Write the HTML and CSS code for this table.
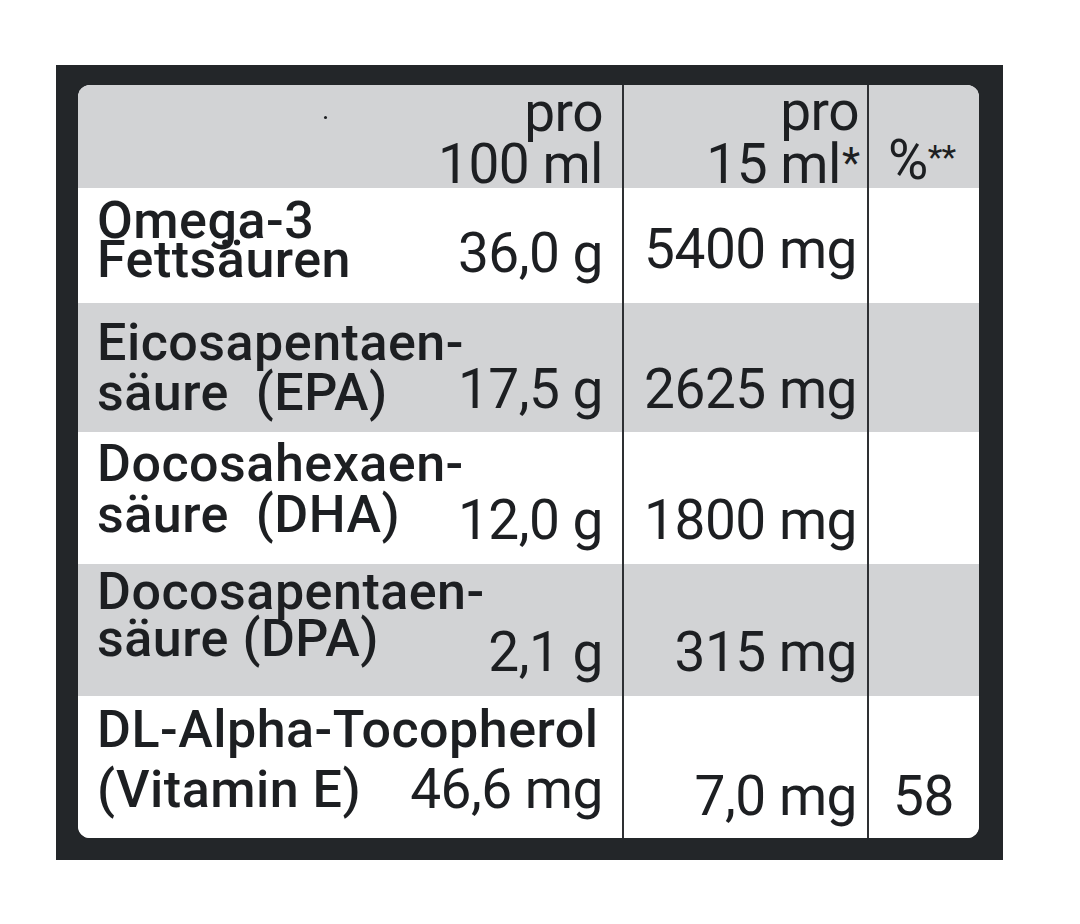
FILE: index.html
```html
<!DOCTYPE html>
<html lang="de">
<head>
<meta charset="utf-8">
<title>Nährwerte</title>
<link rel="stylesheet" href="styles.css">
</head>
<body>
<div class="frame">
  <div class="table">
    <div class="row head">
      <div class="cell name"><span class="dot"></span></div>
      <div class="cell v100"><span>pro<br>100 ml</span></div>
      <div class="cell v15"><span>pro<br>15 ml<span class="ast ast-one">*</span></span></div>
      <div class="cell pct"><span>%<span class="ast">**</span></span></div>
    </div>
    <div class="row r1">
      <div class="cell name">Omega-3<br>Fettsäuren</div>
      <div class="cell v100"><span>36,0 g</span></div>
      <div class="cell v15"><span>5400 mg</span></div>
      <div class="cell pct"></div>
    </div>
    <div class="row r2 gray">
      <div class="cell name">Eicosapentaen-<br>säure&nbsp; (EPA)</div>
      <div class="cell v100"><span>17,5 g</span></div>
      <div class="cell v15"><span>2625 mg</span></div>
      <div class="cell pct"></div>
    </div>
    <div class="row r3">
      <div class="cell name">Docosahexaen-<br>säure&nbsp; (DHA)</div>
      <div class="cell v100"><span>12,0 g</span></div>
      <div class="cell v15"><span>1800 mg</span></div>
      <div class="cell pct"></div>
    </div>
    <div class="row r4 gray">
      <div class="cell name">Docosapentaen-<br>säure (DPA)</div>
      <div class="cell v100"><span>2,1 g</span></div>
      <div class="cell v15"><span>315 mg</span></div>
      <div class="cell pct"></div>
    </div>
    <div class="row r5">
      <div class="cell name">DL-Alpha-Tocopherol<br>(Vitamin E)</div>
      <div class="cell v100"><span>46,6 mg</span></div>
      <div class="cell v15"><span>7,0 mg</span></div>
      <div class="cell pct"><span>58</span></div>
    </div>
  </div>
</div>
</body>
</html>
```

FILE: styles.css
```css
html, body {
  margin: 0;
  padding: 0;
  background: #ffffff;
}

body {
  font-family: Roboto, "Liberation Sans", sans-serif;
  color: #1d1f22;
}

.frame {
  margin: 65px 0 0 56px;
  width: 947px;
  height: 795px;
  box-sizing: border-box;
  padding: 20px 24px 22px 22px;
  background: #232629;
}

.table {
  width: 901px;
  border-radius: 12px;
  overflow: hidden;
  background: #ffffff;
}

.row {
  display: grid;
  grid-template-columns: 330px 214px 245px 112px;
  background: #ffffff;
}

.row.gray,
.row.head {
  background: #d2d3d5;
}

.head { height: 103px; }
.r1 { height: 115px; }
.r2 { height: 129px; }
.r3 { height: 132px; }
.r4 { height: 132px; }
.r5 { height: 142px; }

.cell {
  box-sizing: border-box;
  min-width: 0;
}

.v15,
.pct {
  border-left: 2px solid #2e3033;
}

.name {
  position: relative;
  padding-left: 19px;
  white-space: nowrap;
  font-size: 52px;
  font-weight: 500;
  letter-spacing: 0.5px;
  line-height: 48px;
}

.r1 .name { padding-top: 13px; line-height: 39px; }
.r2 .name { padding-top: 15px; line-height: 50px; }
.r3 .name { padding-top: 6px; line-height: 51px; }
.r4 .name { padding-top: 4px; line-height: 47px; }
.r5 .name { padding-top: 4px; line-height: 60px; }

.v100,
.v15,
.pct {
  display: flex;
  align-items: flex-end;
  white-space: nowrap;
  font-size: 55px;
  font-weight: 400;
  line-height: 55px;
  letter-spacing: -0.5px;
  padding-bottom: 16px;
}

.v100 {
  justify-content: flex-end;
  padding-right: 19px;
}

.v15 {
  justify-content: flex-end;
  padding-right: 10px;
}

.pct {
  justify-content: flex-start;
  padding-left: 24px;
}

.r1 .v100 { padding-bottom: 22px; }
.r1 .v15 { padding-bottom: 26px; }
.r2 .v100,
.r2 .v15 { padding-bottom: 15px; }
.r5 .v100 { padding-bottom: 21px; }
.r5 .v15,
.r5 .pct { padding-bottom: 14px; }

.head .v100,
.head .v15,
.head .pct {
  font-weight: 400;
  line-height: 52px;
  padding-bottom: 0;
  text-align: right;
}

.head .v15 {
  padding-right: 8px;
}

.head .pct {
  padding-left: 19px;
  padding-bottom: 4px;
}

.ast {
  font-size: 34px;
  vertical-align: 10px;
  letter-spacing: -1px;
}

.ast-one {
  font-size: 42px;
  vertical-align: 6px;
  margin-left: 1px;
}

.dot {
  position: absolute;
  left: 246px;
  top: 31px;
  width: 3px;
  height: 3px;
  border-radius: 50%;
  background: #1d1f22;
}
```
